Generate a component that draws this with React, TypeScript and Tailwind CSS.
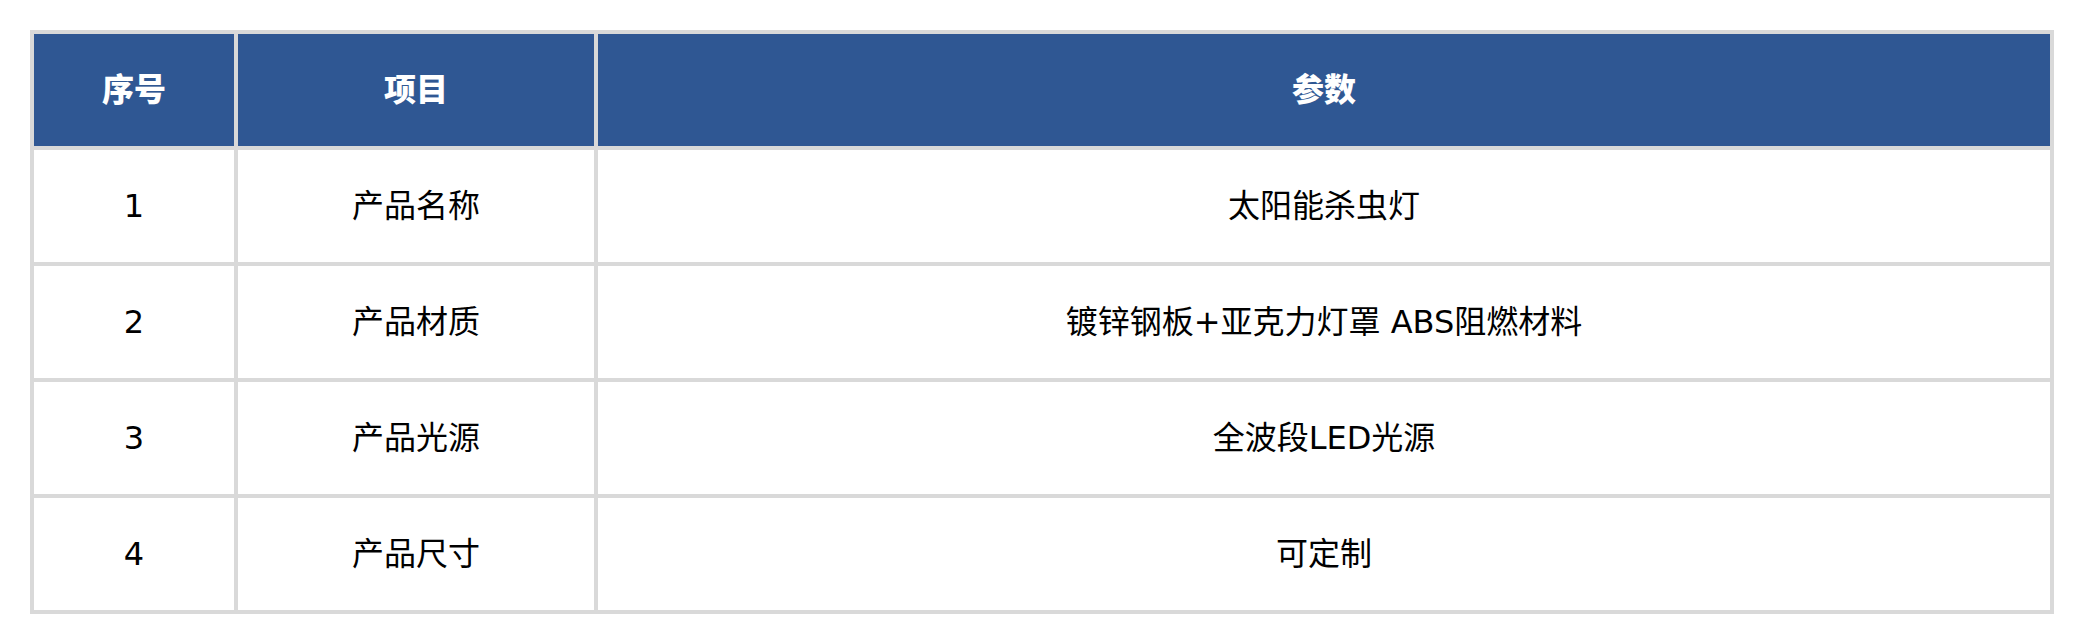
import { Fragment } from "react";

const rows = [
  { no: "1", item: "产品名称", value: "太阳能杀虫灯" },
  { no: "2", item: "产品材质", value: "镀锌钢板+亚克力灯罩 ABS阻燃材料" },
  { no: "3", item: "产品光源", value: "全波段LED光源" },
  { no: "4", item: "产品尺寸", value: "可定制" },
];

const cell = "flex items-center justify-center bg-white text-[32px]";

export default function App() {
  return (
    <div
      className="min-h-[644px] bg-white px-[30px] pt-[30px] text-black"
      style={{ fontFamily: '"DejaVu Sans", "Noto Sans CJK SC", sans-serif' }}
    >
      <div className="grid grid-cols-[200px_356px_1fr] auto-rows-[112px] gap-[4px] bg-[#d9d9d9] p-[4px]">
        {["序号", "项目", "参数"].map((h) => (
          <div
            key={h}
            className="flex items-center justify-center bg-[#2f5793] text-[32px] font-extrabold text-white"
          >
            {h}
          </div>
        ))}
        {rows.map((r) => (
          <Fragment key={r.no}>
            <div className={cell}>{r.no}</div>
            <div className={cell}>{r.item}</div>
            <div className={cell}>{r.value}</div>
          </Fragment>
        ))}
      </div>
    </div>
  );
}
